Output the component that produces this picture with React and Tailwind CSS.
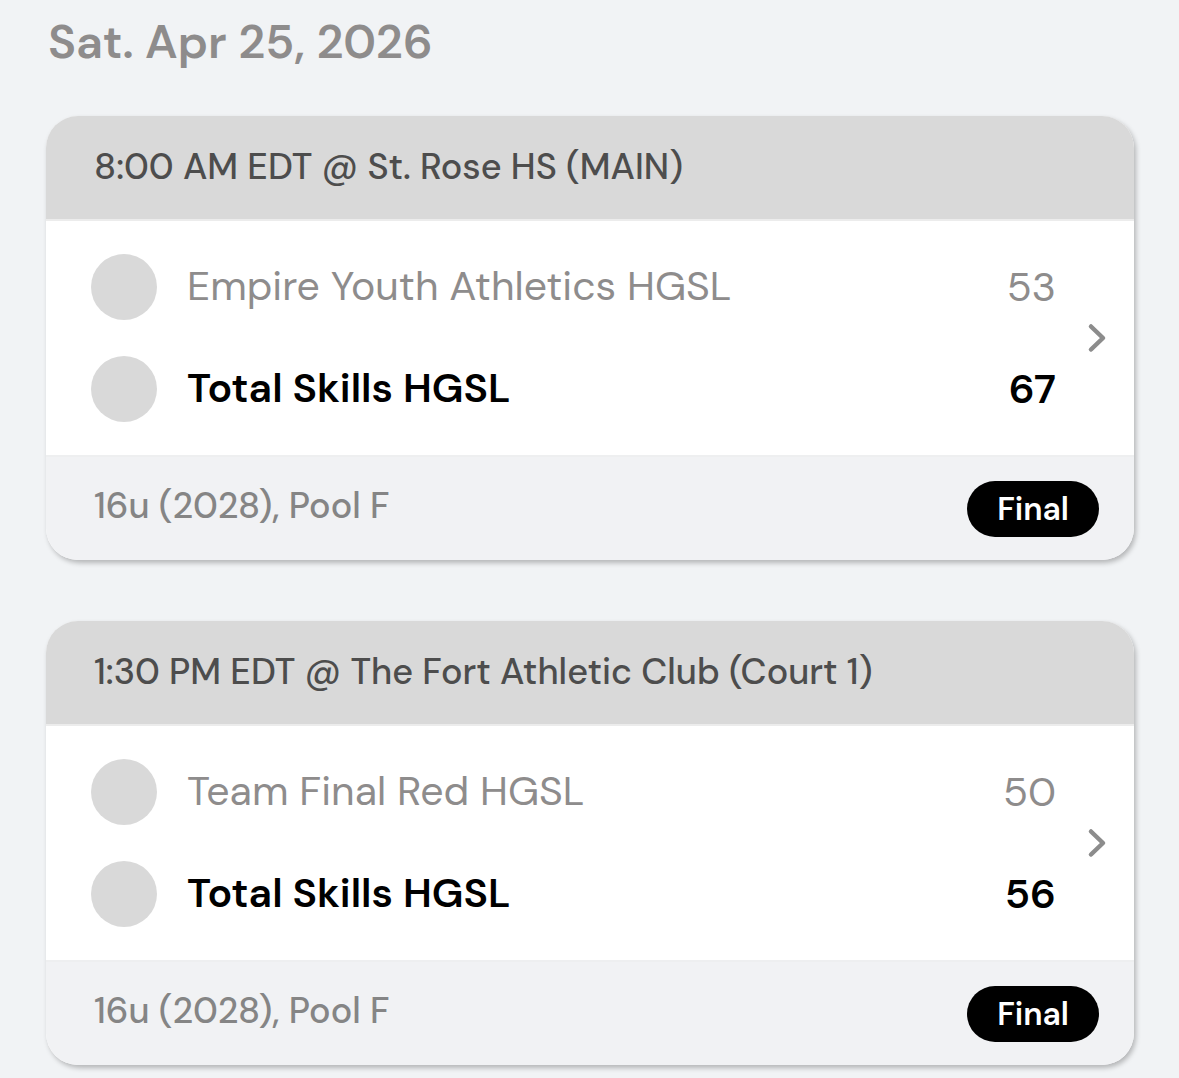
import React from 'react'

const games = [
  {
    id: 1,
    time: '8:00 AM EDT @ St. Rose HS (MAIN)',
    division: '16u (2028), Pool F',
    status: 'Final',
    teams: [
      { name: 'Empire Youth Athletics HGSL', score: 53 },
      { name: 'Total Skills HGSL', score: 67, winner: true },
    ],
  },
  {
    id: 2,
    time: '1:30 PM EDT @ The Fort Athletic Club (Court 1)',
    division: '16u (2028), Pool F',
    status: 'Final',
    teams: [
      { name: 'Team Final Red HGSL', score: 50 },
      { name: 'Total Skills HGSL', score: 56, winner: true },
    ],
  },
]

function TeamRow({ team }) {
  return (
    <li className={`flex items-center text-[41px] leading-[64px] ${team.winner ? 'font-semibold text-black' : 'font-normal text-[#8e8c8c]'}`}>
      <span className="mr-[30px] size-[66px] shrink-0 rounded-full bg-[#d9d9d9]" />
      <span className="flex-1 pb-0.5">{team.name}</span>
      <span>{team.score}</span>
    </li>
  )
}

function GameCard({ game }) {
  return (
    <article className="overflow-hidden rounded-[32px] bg-white shadow-[2px_3px_5px_rgba(0,0,0,0.25)]">
      <header className="border-b-2 border-[#ececec] bg-[#d9d9d9] px-12 pb-0.5">
        <h3 className="text-[36px] font-medium leading-[101px] text-[#4d4d4d]">{game.time}</h3>
      </header>
      <div className="flex items-center py-[33px] pl-[45px] pr-[27px]">
        <ul className="flex flex-1 flex-col gap-9">
          {game.teams.map((team) => (
            <TeamRow key={team.name} team={team} />
          ))}
        </ul>
        <svg className="ml-[31px] h-[30px] w-[20px]" viewBox="0 0 20 30" fill="none" stroke="#8c8c8c" strokeWidth="4.5" strokeLinecap="round" strokeLinejoin="round">
          <path d="M4 3.5L16 15L4 26.5" />
        </svg>
      </div>
      <footer className="flex items-start justify-between border-t-2 border-[#eeeff0] bg-[#f1f2f4] pb-[23px] pl-12 pr-[35px] pt-6">
        <p className="text-[36px] font-medium leading-[50px] text-[#858585]">{game.division}</p>
        <span className="rounded-[28px] bg-black px-[30px] text-[32px] font-semibold leading-[56px] text-white">{game.status}</span>
      </footer>
    </article>
  )
}

export default function App() {
  return (
    <main className="min-h-screen bg-[#f1f3f5] pb-[13px] pl-[46px] pr-[45px] pt-2 font-['DM_Sans','Open_Sans',sans-serif]">
      <h2 className="pl-0.5 text-[47px] font-semibold leading-[68px] text-[#8e8c8c]">Sat. Apr 25, 2026</h2>
      <div className="mt-10 flex flex-col gap-[61px]">
        {games.map((game) => (
          <GameCard key={game.id} game={game} />
        ))}
      </div>
    </main>
  )
}
